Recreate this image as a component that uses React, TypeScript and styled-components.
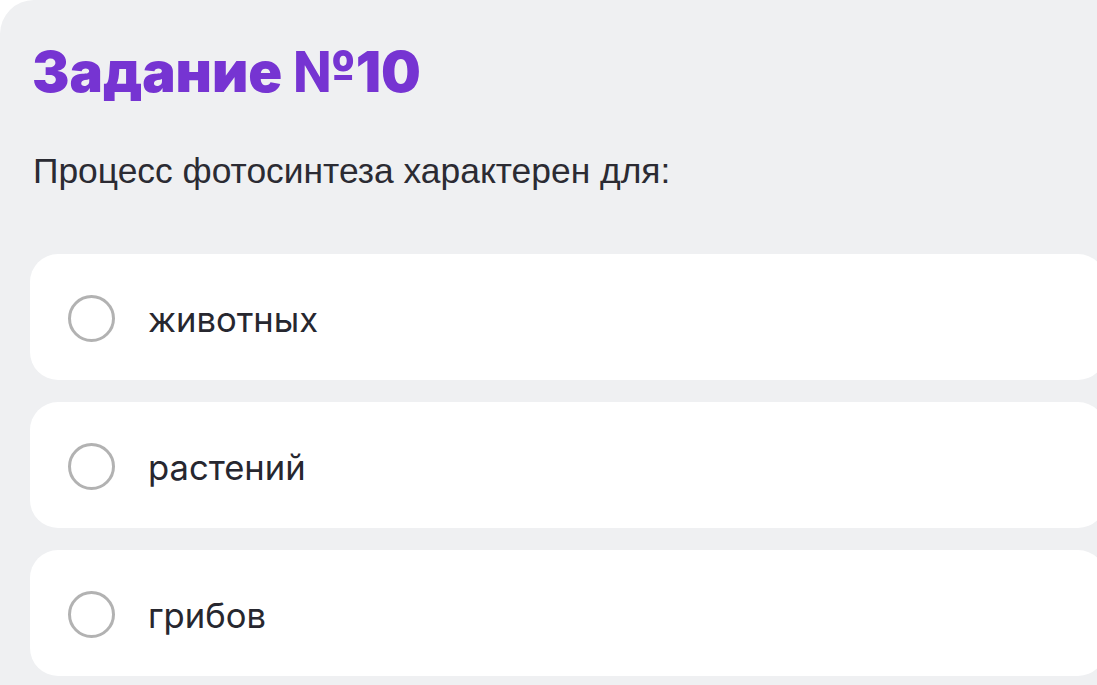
import React from "react";
import styled, { createGlobalStyle } from "styled-components";

const Global = createGlobalStyle`
  html, body { margin: 0; padding: 0; background: #ffffff; overflow: hidden; }
  body { font-family: Inter, "Noto Sans", sans-serif; }
`;

const Panel = styled.section`
  width: 1160px;
  min-height: 720px;
  box-sizing: border-box;
  background: #eff0f2;
  border-top-left-radius: 34px;
  padding: 44px 0 0 30px;
  display: flex;
  flex-direction: column;
`;

const Title = styled.h1`
  margin: 0 0 0 2px;
  font-family: Inter, sans-serif;
  font-weight: 900;
  font-size: 56px;
  line-height: 56px;
  color: #7634d2;
  letter-spacing: 0px;
`;

const Question = styled.p`
  margin: 53px 0 0 3px;
  font-family: "Liberation Sans", Arial, sans-serif;
  font-size: 35.4px;
  line-height: 36px;
  color: #2b2b33;
`;

const Options = styled.div`
  margin-top: 65px;
  display: flex;
  flex-direction: column;
  gap: 22px;
  width: 1076px;
`;

const Option = styled.label`
  height: 126px;
  box-sizing: border-box;
  background: #ffffff;
  border-radius: 28px;
  display: flex;
  align-items: center;
  padding-left: 38px;
  gap: 33px;
  cursor: pointer;
`;

const Radio = styled.span`
  width: 47px;
  height: 47px;
  box-sizing: border-box;
  border-radius: 50%;
  border: 3.5px solid #b2b2b2;
  flex: none;
  margin-top: 3px;
`;

const OptionText = styled.span`
  font-family: Inter, sans-serif;
  font-size: 34.6px;
  line-height: 36px;
  color: #27272f;
  margin-top: 4px;
`;

const answers = ["животных", "растений", "грибов"];

export default function App() {
  return (
    <>
      <Global />
      <Panel>
        <Title>Задание №10</Title>
        <Question>Процесс фотосинтеза характерен для:</Question>
        <Options>
          {answers.map((a) => (
            <Option key={a}>
              <Radio />
              <OptionText>{a}</OptionText>
            </Option>
          ))}
        </Options>
      </Panel>
    </>
  );
}
